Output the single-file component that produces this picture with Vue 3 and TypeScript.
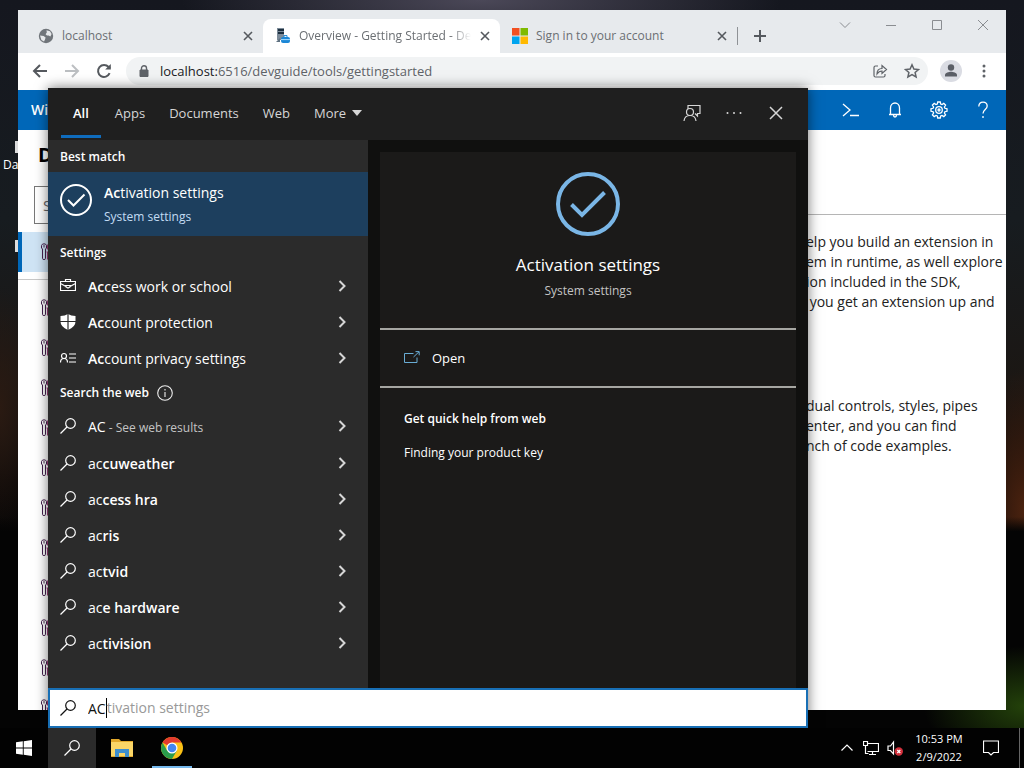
<script setup lang="ts">
import { ref } from 'vue'

interface SettingItem { icon: 'case' | 'shield' | 'privacy'; rest: string }
interface WebItem { lead: string; rest: string }

const query = ref('AC')

const filters: string[] = ['Apps', 'Documents', 'Web']

const settings: SettingItem[] = [
  { icon: 'case', rest: 'cess work or school' },
  { icon: 'shield', rest: 'count protection' },
  { icon: 'privacy', rest: 'count privacy settings' },
]

const webItems: WebItem[] = [
  { lead: 'ac', rest: 'cuweather' },
  { lead: 'ac', rest: 'cess hra' },
  { lead: 'ac', rest: 'ris' },
  { lead: 'ac', rest: 'tvid' },
  { lead: 'ac', rest: 'e hardware' },
  { lead: 'ac', rest: 'tivision' },
]

const treeRows: number[] = Array.from({ length: 11 }, (_, i) => i)

const intro: string[] = [
  'elp you build an extension in',
  'em in runtime, as well explore',
  'ion included in the SDK,',
  ' you get an extension up and',
]
const outro: string[] = [
  'dual controls, styles, pipes',
  'enter, and you can find',
  'nch of code examples.',
]
</script>

<template>
  <div class="screen">
    <div class="desktop">
      <div class="shortcut first"><i></i><span>Da</span></div>
      <div class="shortcut second"><i></i></div>

      <section class="browser">
        <div class="tabstrip">
          <div class="tab">
            <svg class="fav" viewBox="0 0 16 16"><circle cx="8" cy="8" r="7.2" fill="#70757a" /><path d="M8.5 2.2 L12 3.2 L13.6 6 L12.4 8.6 L10.6 7.4 L9 7.6 L7.6 6.2 L8.8 4.6 Z M2 7.4 L5.6 8 L7.6 9.6 L7 11.6 L6 13.6 L3.4 12 Z" fill="#e6e8ea" /></svg>
            <span class="tab-title">localhost</span>
            <button class="tab-close" aria-label="Close tab"><svg viewBox="0 0 10 10"><path d="M1 1 L9 9 M9 1 L1 9" /></svg></button>
          </div>
          <div class="tab active">
            <svg class="fav" viewBox="0 0 16 16"><path d="M2 0h7v12H2z" fill="#7c8b99" /><path d="M3 1h6v2H3zM3 4h6v2H3z" fill="#1d3040" /><path d="M1 14l4-4v4z" fill="#5f7180" /><rect x="6" y="9" width="9" height="6" rx="2" fill="#1c87d6" /><path d="M9 9V7.600h3V9" fill="none" stroke="#1c87d6" /><path d="M6 11.600h9" stroke="#a5dcff" /></svg>
            <span class="tab-title fade">Overview - Getting Started - Dev</span>
            <button class="tab-close" aria-label="Close tab"><svg viewBox="0 0 10 10"><path d="M1 1 L9 9 M9 1 L1 9" /></svg></button>
          </div>
          <div class="tab last">
            <svg class="fav" viewBox="0 0 16 16"><path d="M0 0h7.5v7.5H0z" fill="#f25022" /><path d="M8.5 0H16v7.5H8.500z" fill="#7fba00" /><path d="M0 8.500h7.5V16H0z" fill="#00a4ef" /><path d="M8.500 8.500H16V16H8.500z" fill="#ffb900" /></svg>
            <span class="tab-title">Sign in to your account</span>
            <button class="tab-close" aria-label="Close tab"><svg viewBox="0 0 10 10"><path d="M1 1 L9 9 M9 1 L1 9" /></svg></button>
          </div>
          <button class="new-tab" aria-label="New tab"><svg viewBox="0 0 12 12"><path d="M6 0V12M0 6H12" /></svg></button>
          <div class="win-buttons">
            <button aria-label="Search tabs"><svg viewBox="0 0 12 12"><path d="M1 3.500l5 5 5-5" /></svg></button>
            <button aria-label="Minimize"><svg viewBox="0 0 12 12"><path d="M1 6.500h10" /></svg></button>
            <button aria-label="Maximize"><svg viewBox="0 0 12 12"><path d="M1.500 1.500h9v9h-9z" /></svg></button>
            <button aria-label="Close"><svg viewBox="0 0 12 12"><path d="M1 1l10 10M11 1L1 11" /></svg></button>
          </div>
        </div>

        <div class="toolbar">
          <button class="nav" aria-label="Back"><svg viewBox="0 0 16 16"><path d="M15 8H2M8 2L2 8l6 6" /></svg></button>
          <button class="nav off" aria-label="Forward"><svg viewBox="0 0 16 16"><path d="M1 8h13M8 2l6 6-6 6" /></svg></button>
          <button class="nav" aria-label="Reload"><svg viewBox="0 0 16 16"><path d="M13.600 10.200A6 6 0 1 1 12.600 4L14 5.400" /><path d="M14.800 1v5.600H9.200z" class="solid" /></svg></button>
          <div class="omnibox">
            <svg class="lock" viewBox="0 0 10 12"><path d="M1 5h8v6.500H1z" fill="#5f6368" stroke="#5f6368" stroke-linejoin="round" /><path d="M2.500 5V3a2.500 2.200 0 0 1 5 0v2" fill="none" stroke="#5f6368" stroke-width="1.400" /></svg>
            <p class="url"><b>localhost:</b>6516/devguide/tools/gettingstarted</p>
            <button aria-label="Share"><svg viewBox="0 0 16 16"><path d="M6 3H3.500Q2 3 2 4.500v8Q2 14 3.500 14h8q1.500 0 1.500-1.500V11M5 11q0-5.500 5-5.500V2.500l4.500 4-4.500 4V8Q7 8 5 11z" /></svg></button>
            <button aria-label="Bookmark"><svg viewBox="0 0 16 16"><path stroke-width="1.500" d="M8 1.800l1.900 4.200 4.600.5-3.400 3 1 4.500L8 11.700 3.900 14l1-4.500-3.400-3 4.600-.5z" /></svg></button>
          </div>
          <button class="avatar" aria-label="Profile"><svg viewBox="0 0 22 22"><circle cx="11" cy="7.500" r="3.200" /><path d="M5 16.500v-1.500c0-2.400 4-3.300 6-3.300s6 .9 6 3.300v1.500z" /></svg></button>
          <button class="kebab" aria-label="Menu"><svg viewBox="0 0 4 14"><circle cx="2" cy="2" r="1.500" /><circle cx="2" cy="7" r="1.500" /><circle cx="2" cy="12" r="1.500" /></svg></button>
        </div>

        <div class="wac-bar">
          <strong>Wi</strong>
          <nav>
            <button aria-label="PowerShell"><svg viewBox="0 0 18 18"><path d="M1 3l7 6-7 6M8 14.500h9" /></svg></button>
            <button aria-label="Notifications"><svg viewBox="0 0 18 18"><path d="M3 13.500h12M4.500 13.500V7a4.500 5 0 0 1 9 0v6.500M7.500 14q0 2 1.500 2t1.500-2" /></svg></button>
            <button aria-label="Settings"><svg viewBox="0 0 18 18"><path d="M7.700 1h2.600l.4 2.100 1.300.5 1.800-1.200 1.800 1.800-1.200 1.800.5 1.300 2.100.4v2.600l-2.100.4-.5 1.300 1.200 1.800-1.800 1.800-1.800-1.200-1.300.5-.4 2.100H7.700l-.4-2.100-1.300-.5-1.800 1.200-1.800-1.800 1.200-1.800-.5-1.300L1 10.300V7.700l2.100-.4.5-1.300-1.200-1.800 1.800-1.800L6 3.600l1.300-.5z" /><circle cx="9" cy="9" r="3.300" /><circle cx="9" cy="9" r="1" /></svg></button>
            <button aria-label="Help"><svg viewBox="0 0 18 18"><path d="M4.800 5.500Q5 1.200 9 1.200t4.200 3.900c0 3.400-4.200 3.400-4.200 7.400M9 15v2" /></svg></button>
          </nav>
        </div>

        <div class="page">
          <aside>
            <h1>D</h1>
            <input class="page-search" type="text" placeholder="S" aria-label="Search tools" />
            <div class="tree-item selected"><svg viewBox="0 0 18 18"><path class="a" d="M2.500 6L1.500 5V2.500Q2 .8 4 .8t2.500 1.700V5L5.500 6v9.500q0 1-1.500 1t-1.500-1zM4 2v2.500" /><path class="b" d="M7.500 1.500v5M7.500 9v7.500M6.500 9h4v7.500" /></svg></div>
            <hr />
            <div v-for="n in treeRows" :key="n" class="tree-item"><svg viewBox="0 0 18 18"><path class="a" d="M2.500 6L1.500 5V2.500Q2 .8 4 .8t2.500 1.700V5L5.500 6v9.500q0 1-1.500 1t-1.500-1zM4 2v2.500" /><path class="b" d="M7.500 1.500v5M7.500 9v7.500M6.500 9h4v7.500" /></svg></div>
          </aside>
          <main>
            <header></header>
            <div class="copy">
              <p><span v-for="line in intro" :key="line">{{ line }}</span></p>
              <p><span v-for="line in outro" :key="line">{{ line }}</span></p>
            </div>
          </main>
        </div>
      </section>

      <section class="search-panel">
        <header class="filters">
          <button class="filter on">All</button>
          <button v-for="f in filters" :key="f" class="filter">{{ f }}</button>
          <button class="filter">More<svg class="caret-down" viewBox="0 0 10 6"><path d="M0 0h10L5 6z" /></svg></button>
          <div class="panel-tools">
            <button aria-label="Feedback"><svg viewBox="0 0 18 18"><path d="M5 5V1.500h12v8h-2.500v2.500L12 9.500" /><circle cx="7" cy="8" r="3.500" /><path d="M1 17q.5-5.500 6-5.500T13 17" /></svg></button>
            <button aria-label="Options"><svg viewBox="0 0 18 18"><g class="dots"><circle cx="2.500" cy="9" r="1" /><circle cx="9" cy="9" r="1" /><circle cx="15.500" cy="9" r="1" /></g></svg></button>
            <button aria-label="Close search"><svg viewBox="0 0 18 18"><path stroke-width="1.500" d="M3 3l12 12M15 3L3 15" /></svg></button>
          </div>
        </header>

        <div class="panel-body">
          <div class="results">
            <h2>Best match</h2>
            <button class="best">
              <svg viewBox="0 0 32 32"><circle cx="16" cy="16" r="15" /><path d="M8 16l5.500 5.500L24.500 10.500" /></svg>
              <span class="best-text"><span class="name"><b>Ac</b>tivation settings</span><span class="kind">System settings</span></span>
            </button>
            <h2>Settings</h2>
            <button v-for="s in settings" :key="s.rest" class="row">
              <svg v-if="s.icon === 'case'" class="ico" viewBox="0 0 16 16"><path d="M.5 3.500h15v9H.5zM5.500 3.500v-2h5v2M.5 5.500L6 8.500M15.500 5.500L10 8.500M6 7.500h4v1.500L8 10 6 9z" /></svg>
              <svg v-else-if="s.icon === 'shield'" class="ico" viewBox="0 0 16 16"><path class="white" d="M8 0q3 2 7.500 2v5.500q0 5.500-7.500 8.500Q.5 13 .5 7.500V2Q5 2 8 0z" /><path class="cut" d="M8 0v16M0 7.500h16" /></svg>
              <svg v-else class="ico" viewBox="0 0 16 16"><circle cx="4" cy="6" r="2.500" /><path d="M.5 12.500q0-4 3.500-4t3.500 4M9 4h7M9 8h7M9 12h7" /></svg>
              <span class="label"><b>Ac</b>{{ s.rest }}</span>
              <svg class="chev" viewBox="0 0 8 12"><path d="M1.500 1l5 5-5 5" /></svg>
            </button>
            <h2>Search the web <svg class="info" viewBox="0 0 16 16"><circle cx="8" cy="8" r="7.300" /><path d="M8 7v5M8 4v1.500" /></svg></h2>
            <button class="row first-web">
              <svg class="ico" viewBox="0 0 16 16"><circle cx="10.500" cy="5.500" r="4.800" /><path d="M7 9L.5 15.500" /></svg>
              <span class="label">AC<small> - See web results</small></span>
              <svg class="chev" viewBox="0 0 8 12"><path d="M1.500 1l5 5-5 5" /></svg>
            </button>
            <button v-for="w in webItems" :key="w.rest" class="row">
              <svg class="ico" viewBox="0 0 16 16"><circle cx="10.500" cy="5.500" r="4.800" /><path d="M7 9L.5 15.500" /></svg>
              <span class="label">{{ w.lead }}<b>{{ w.rest }}</b></span>
              <svg class="chev" viewBox="0 0 8 12"><path d="M1.500 1l5 5-5 5" /></svg>
            </button>
          </div>

          <div class="preview">
            <div class="card">
              <div class="hero">
                <svg viewBox="0 0 64 64"><circle cx="32" cy="32" r="30" /><path d="M15.500 32.500L26 43 48.500 20.500" /></svg>
                <h3>Activation settings</h3>
                <p>System settings</p>
              </div>
              <button class="open"><svg viewBox="0 0 16 14"><path d="M9.500 2.500H.5v9h12.500v-5M9.500 6L15 .8M11.500.6h3.700v3.700" /></svg>Open</button>
              <div class="help">
                <h4>Get quick help from web</h4>
                <a href="#">Finding your product key</a>
              </div>
            </div>
          </div>
        </div>

        <label class="search-box">
          <svg class="ico" viewBox="0 0 16 16"><circle cx="10.500" cy="5.500" r="4.800" /><path d="M7 9L.5 15.500" /></svg>
          <span class="field">
            <input v-model="query" type="text" aria-label="Type here to search" />
            <span class="ghost" aria-hidden="true"><span class="typed">{{ query }}</span><i></i>tivation settings</span>
          </span>
        </label>
      </section>
    </div>

    <footer class="taskbar">
      <button class="task" aria-label="Start"><svg class="start" viewBox="0 0 16 16"><path d="M0 2.300L6.800 1.300V7.600H0zM7.700 1.200L16 0v7.600H7.700zM0 8.400h6.800v6.300L0 13.700zM7.700 8.400H16V16l-8.300-1.200z" /></svg></button>
      <button class="task pressed" aria-label="Search"><svg class="glass" viewBox="0 0 16 16"><circle cx="10.500" cy="5.500" r="4.800" /><path d="M7 9L.5 15.500" /></svg></button>
      <button class="task explorer" aria-label="File Explorer"><svg class="folder" viewBox="0 0 22 20"><path d="M0 1h8l2 2h12v16H0z" fill="#e3a92b" /><path d="M0 4h22v14H0z" fill="#fbd667" /><path d="M4 19v-8h14v8h-4v-4H8v4z" fill="#3f8fcd" /></svg></button>
      <button class="task running" aria-label="Chrome"><svg class="chrome" viewBox="0 0 22 22"><circle cx="11" cy="11" r="11" fill="#fbc116" /><path d="M11 11L1.500 5.500A11 11 0 0 1 20.500 5.500H11z" fill="#e33b2e" /><path d="M1.500 5.500A11 11 0 0 0 11 22l4.800-8.300L11 11 6.200 13.700z" fill="#2a9d4b" /><circle cx="11" cy="11" r="5.500" fill="#fff" /><circle cx="11" cy="11" r="4.300" fill="#4486f0" /></svg></button>
      <div class="tray">
        <button class="t-up" aria-label="Show hidden icons"><svg viewBox="0 0 16 16"><path d="M2.500 10.500L8 5l5.500 5.500" /></svg></button>
        <button aria-label="Network"><svg viewBox="0 0 16 16"><path d="M5 3.500h10.500v8H4.500M9.500 11.500v3M6 14.500h7M.5 1.500h4v4h-4zM2.500 5.500v8h3" /></svg></button>
        <button aria-label="Volume"><svg viewBox="0 0 16 16"><path d="M1 6h2.500L6.500 2v12L3.500 10.500H1z" /><circle cx="11.800" cy="11.500" r="4.200" class="bad" /><path d="M10.300 10l3 3M13.300 10l-3 3" /></svg></button>
        <time>10:53 PM<br />2/9/2022</time>
        <button class="notes" aria-label="Notifications"><svg viewBox="0 0 16 16"><path d="M.5 1h15v11.500H10.500L8 15l-2.500-2.500H.5z" /></svg></button>
        <span class="peek"></span>
      </div>
    </footer>
  </div>
</template>

<style>
html, body { margin: 0; height: 100%; overflow: hidden; background: #000; }
</style>

<style scoped>
.screen, .screen * { box-sizing: border-box; }
.screen { display: flex; flex-direction: column; height: 100vh; font-family: "Open Sans", "Noto Sans", sans-serif; font-size: 14px; line-height: 20px; color: #fff; }
button { margin: 0; padding: 0; border: 0; background: none; color: inherit; font: inherit; display: flex; align-items: center; justify-content: center; flex: none; }
svg { display: block; flex: none; fill: none; }
h1, h2, h3, h4, p { margin: 0; }
b { font-weight: 600; }

.desktop {
  position: relative; flex: 1; overflow: hidden;
  background:
    radial-gradient(ellipse 100px 60px at 100% 97%, #23410a 0%, transparent 100%),
    linear-gradient(transparent 71%, #040404 73%),
    radial-gradient(ellipse 60px 140px at 100% 70%, #4a220f 0%, transparent 100%),
    radial-gradient(ellipse 40px 120px at 0% 56%, #2a1a12 0%, transparent 100%),
    radial-gradient(ellipse 300px 60px at 47% 0%, #4b4858 0%, transparent 100%),
    linear-gradient(#15171f 0%, #171c20 30%, #1b1714 52%, #0c0908 66%, #050505 100%);
}
.shortcut { position: absolute; left: 3px; font-size: 12px; line-height: 16px; }
.shortcut i { display: block; width: 4px; height: 12px; margin-left: 12px; background: #ddd; }
.shortcut.first { top: 141px; }
.shortcut.first i { margin-bottom: 4px; }
.shortcut.second { top: 240px; }

.browser { position: absolute; inset: 10px 18px 18px 18px; display: flex; flex-direction: column; background: #fff; color: #000; overflow: hidden; }
.tabstrip { display: flex; height: 43px; flex: none; padding-left: 8px; background: #e7eaed; }
.tab { display: flex; align-items: center; width: 237px; height: 34px; margin-top: 9px; padding: 0 9px 0 12px; font-size: 12px; color: #6b6f73; }
.tab.active { background: #fff; border-radius: 8px 8px 0 0; }
.fav { width: 16px; height: 16px; margin-right: 8px; }
.tab-title { flex: 1; overflow: hidden; white-space: nowrap; }
.fade { -webkit-mask-image: linear-gradient(90deg, #000 88%, transparent); mask-image: linear-gradient(90deg, #000 88%, transparent); }
.tab-close { width: 12px; height: 16px; margin-left: 8px; }
.tab-close svg { width: 10px; height: 10px; stroke: #55595e; stroke-width: 1.6; }
.new-tab { width: 44px; height: 18px; margin-top: 17px; border-left: 1px solid #8f9296; }
.new-tab svg { width: 12px; height: 12px; stroke: #55595e; stroke-width: 2; }
.win-buttons { display: flex; margin-left: auto; height: 30px; }
.win-buttons button { width: 46px; }
.win-buttons svg { width: 12px; height: 12px; stroke: #8a8d91; }
.toolbar { display: flex; align-items: center; flex: none; height: 37px; padding: 0 6px 2px; }
.nav { width: 32px; height: 28px; }
.nav svg { width: 16px; height: 16px; stroke: #55595e; stroke-width: 2; }
.nav.off svg { stroke: #bcbfc2; }
.toolbar .solid { fill: #55595e; stroke: none; }
.omnibox { display: flex; align-items: center; flex: 1; height: 28px; margin: 0 12px 0 6px; padding: 0 0 0 13px; border-radius: 14px; background: #f1f3f4; }
.lock { width: 10px; height: 12px; margin-right: 11px; }
.url { flex: 1; font-size: 13px; color: #5f6368; white-space: nowrap; }
.url b { font-weight: 400; color: #202124; }
.omnibox button { width: 32px; height: 28px; }
.omnibox button svg { width: 16px; height: 16px; stroke: #5f6368; stroke-width: 1.2; }
.avatar { width: 22px; height: 22px; border-radius: 50%; background: #dadce3; }
.avatar svg { width: 22px; height: 22px; fill: #5a5e66; }
.kebab { width: 32px; height: 28px; margin-left: 6px; }
.kebab svg { width: 4px; height: 14px; fill: #5f6368; }
.wac-bar { display: flex; align-items: center; justify-content: space-between; flex: none; height: 40px; padding: 0 1px 0 13px; background: #0067b8; color: #fff; }
.wac-bar strong { font-weight: 600; }
.wac-bar nav { display: flex; }
.wac-bar nav button { width: 44px; height: 40px; }
.wac-bar svg { width: 18px; height: 18px; stroke: #fff; stroke-width: 1.3; }
.page { display: flex; flex: 1; min-height: 0; }
aside { width: 280px; flex: none; overflow: hidden; }
h1 { height: 56px; padding: 12px 20px 0; font-size: 20px; line-height: 26px; font-weight: 700; }
.page-search { display: block; width: 248px; height: 38px; margin: 0 16px 8px; padding: 0 8px; border: 1px solid #777; font: inherit; font-size: 15px; }
.page-search::placeholder { color: #666; }
.tree-item { display: flex; align-items: center; height: 40px; padding-left: 22px; }
.tree-item.selected { background: #cfe4f5; border-left: 4px solid #0067b8; padding-left: 18px; }
.tree-item svg { width: 18px; height: 18px; }
.tree-item .a { stroke: #46204f; }
.tree-item .b { stroke: #a3407a; }
aside hr { height: 1px; margin: 7px 0 8px; border: 0; background: #c8c8c8; }
main { flex: 1; min-width: 0; }
main header { height: 85px; border-bottom: 1px solid #b5b5b5; }
.copy { padding: 17px 0 0 508px; }
.copy p { margin-bottom: 84px; color: #222; }
.copy span { display: block; white-space: pre; }

.search-panel { position: absolute; left: 48px; top: 88px; bottom: 0; width: 760px; display: flex; flex-direction: column; background: #1f1f1f; box-shadow: 0 0 12px rgba(0, 0, 0, .55); }
.filters { display: flex; height: 52px; flex: none; padding: 0 11px 0 13px; font-size: 13px; color: #d6d6d6; }
.filter { padding: 2px 12px 0; height: 50px; border-bottom: 3px solid transparent; }
.filter.on { margin-right: 2px; border-color: #0f6cbd; font-weight: 600; color: #fff; }
.caret-down { width: 10px; height: 6px; margin-left: 6px; fill: #d6d6d6; }
.panel-tools { display: flex; margin-left: auto; }
.panel-tools button { width: 42px; height: 50px; }
.panel-tools svg { width: 18px; height: 18px; stroke: #d6d6d6; stroke-width: 1.2; }
.panel-tools .dots { fill: #d6d6d6; stroke: none; }
.panel-body { display: flex; flex: 1; min-height: 0; }
.results { width: 320px; background: #2b2b2b; overflow: hidden; }
h2 { display: flex; align-items: center; height: 32px; padding: 2px 12px 0; font-size: 12px; font-weight: 600; }
.info { width: 16px; height: 16px; margin-left: 8px; stroke: #eee; stroke-width: 1.1; }
.best { width: 100%; height: 64px; padding: 8px 12px; align-items: flex-start; justify-content: flex-start; background: #1d3f5e; }
.best svg { width: 32px; height: 32px; margin-top: 4px; margin-right: 12px; stroke: #fff; stroke-width: 2; }
.best-text { display: flex; flex-direction: column; gap: 4px; padding-top: 1px; text-align: left; }
.name { line-height: 24px; }
.kind { font-size: 12px; line-height: 16px; color: #c3dcf3; }
.row { width: 100%; height: 36px; padding: 0 22px 0 12px; }
.row.first-web { margin-bottom: 1px; }
.ico { width: 16px; height: 16px; margin-right: 12px; stroke: #fff; stroke-width: 1.2; }
.ico .white { fill: #fff; stroke: none; }
.ico .cut { stroke: #2b2b2b; }
.label { flex: 1; padding-top: 2px; text-align: left; }
small { font-size: 12px; color: #c4c4c4; }
.chev { width: 8px; height: 12px; stroke: #d6d6d6; stroke-width: 2; }
.preview { flex: 1; padding: 12px 12px 0; background: #10100f; display: flex; }
.card { flex: 1; background: #1b1a19; }
.hero { display: flex; flex-direction: column; align-items: center; height: 178px; padding-top: 20px; border-bottom: 2px solid #a6a6a2; }
.hero svg { width: 64px; height: 64px; stroke: #7ab6e6; stroke-width: 4; }
h3 { margin-top: 16px; font-size: 17px; line-height: 26px; font-weight: 400; }
.hero p { margin-top: 3px; font-size: 12px; color: #c4c4c4; }
.open { width: 100%; height: 58px; padding: 0 24px; justify-content: flex-start; font-size: 13px; border-bottom: 2px solid #a6a6a2; }
.open svg { width: 16px; height: 14px; margin-right: 12px; stroke: #69acd4; }
.help { display: flex; flex-direction: column; align-items: flex-start; gap: 14px; padding: 21px 24px; font-size: 12px; }
.help h4 { font-size: 12px; font-weight: 600; }
.help a { color: #fff; text-decoration: none; }
.search-box { display: flex; align-items: center; flex: none; height: 40px; padding: 0 10px; border: 2px solid #186fb5; background: #fff; color: #111; }
.search-box .ico { stroke: #111; }
.field { position: relative; flex: 1; }
.field input { display: block; width: 100%; height: 24px; padding: 0; border: 0; outline: 0; background: none; color: #111; font: inherit; caret-color: transparent; }
.ghost { position: absolute; inset: 0; display: flex; align-items: center; pointer-events: none; line-height: 24px; color: #999; }
.typed { visibility: hidden; }
.ghost i { width: 1px; height: 20px; background: #000; }

.taskbar { display: flex; flex: none; height: 40px; background: #020202; }
.task { width: 48px; height: 40px; }
.pressed { background: #2b2b2b; }
.start { width: 16px; height: 16px; fill: #fff; }
.glass { width: 16px; height: 16px; stroke: #fff; stroke-width: 1.2; }
.explorer { margin-left: 2px; }
.folder { width: 22px; height: 20px; }
.chrome { width: 22px; height: 22px; }
.running { width: 40px; margin-left: 6px; border-bottom: 2px solid #76b9ed; padding-top: 2px; }
.tray { display: flex; align-items: center; margin-left: auto; }
.tray button { width: 24px; height: 40px; }
.tray svg { width: 16px; height: 16px; stroke: #fff; stroke-width: 1.2; }
.tray .bad { fill: #d2303c; stroke: none; }
.tray time { width: 64px; text-align: center; font-size: 11px; line-height: 18px; white-space: nowrap; }
.tray .notes { width: 40px; }
.peek { width: 5px; height: 40px; margin-left: 8px; border-left: 1px solid #666; }
</style>
